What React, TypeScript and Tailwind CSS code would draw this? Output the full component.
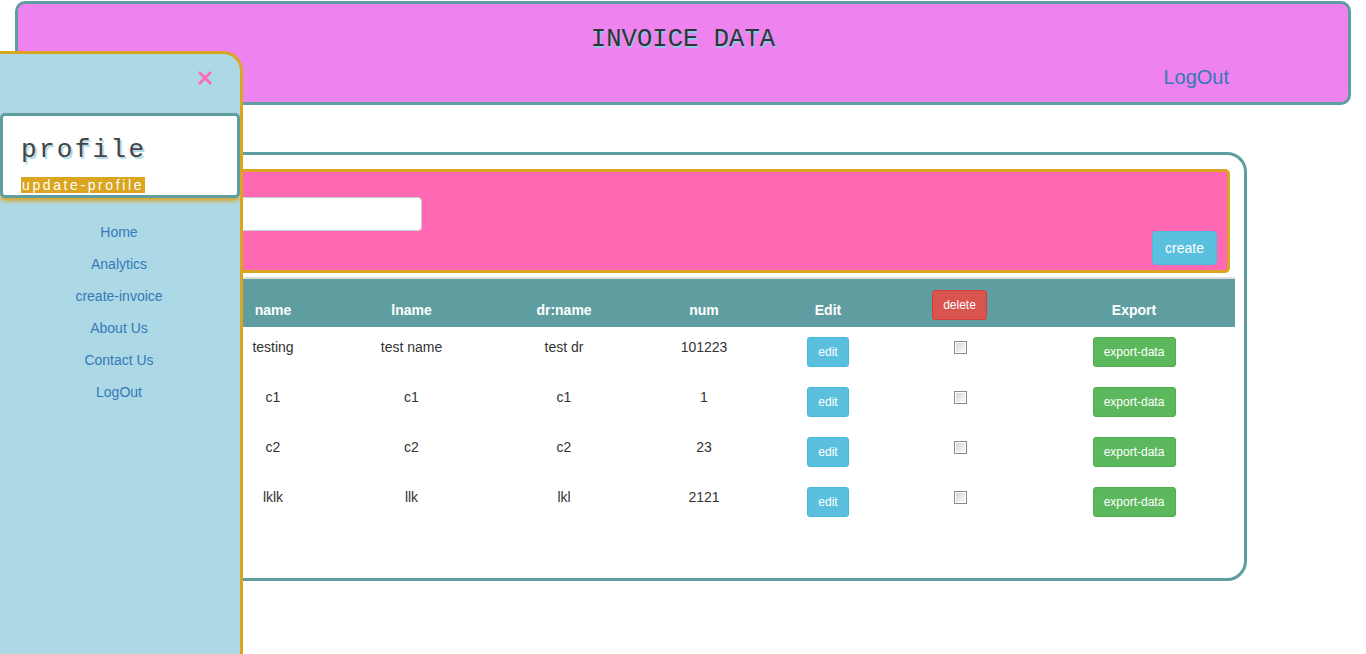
import React from 'react';

const rows = [
  { name: 'testing', lname: 'test name', dr: 'test dr', num: '101223' },
  { name: 'c1', lname: 'c1', dr: 'c1', num: '1' },
  { name: 'c2', lname: 'c2', dr: 'c2', num: '23' },
  { name: 'lklk', lname: 'llk', dr: 'lkl', num: '2121' },
];

function Checkbox() {
  return (
    <span className="mt-[4px] ml-[2px] inline-block w-[13px] h-[13px] border border-[#8a8a8a] bg-white p-[1px]">
      <span className="block w-full h-full bg-gradient-to-br from-[#d6d6d6] to-[#fbfbfb]" />
    </span>
  );
}

function Sidebar() {
  const links = ['Home', 'Analytics', 'create-invoice', 'About Us', 'Contact Us', 'LogOut'];
  return (
    <div className="fixed left-0 top-[51px] bottom-0 w-[243px] bg-[#add8e6] border-t-[3px] border-r-[3px] border-[#daa520] rounded-tr-[20px]">
      <div className="flex justify-end pr-[28px] pt-[17px] h-[59px]">
        <svg width="14" height="14" viewBox="0 0 14 14">
          <path d="M1 1 L13 13 M13 1 L1 13" stroke="#ff69b4" strokeWidth="2.6" />
        </svg>
      </div>
      <div className="h-[85px] bg-white border-[3px] border-[#5f9ea0] rounded-[5px] shadow-[0_3px_4px_#daa520] pl-[18px] pt-[19px]">
        <div className="font-['Liberation_Mono',monospace] text-[26px] leading-[30px] tracking-[2.3px] text-[#444] [text-shadow:2px_2px_1px_#add8e6]">
          profile
        </div>
        <div className="mt-[12px] leading-[16px]">
          <span className="bg-[#daa520] text-white text-[14px] tracking-[2.6px] px-[1px]">update-profile</span>
        </div>
      </div>
      <div className="mt-[18px] pr-[2px] flex flex-col items-center">
        {links.map((l) => (
          <a key={l} className="h-[32px] leading-[32px] text-[14px] text-[#337ab7]">
            {l}
          </a>
        ))}
      </div>
    </div>
  );
}

export default function App() {
  return (
    <div className="relative min-h-screen bg-white font-['Liberation_Sans',Arial,sans-serif] text-[14px] text-[#333] pt-[1px]">
      <div className="mx-[15px] h-[104px] bg-[#ee82ee] border-[3px] border-[#5f9ea0] rounded-[10px]">
        <div className="pt-[22px] text-center leading-[28px] font-['Liberation_Mono',monospace] text-[25.6px] text-[#333] [text-shadow:1px_2px_1px_#87ceeb]">
          INVOICE DATA
        </div>
        <div className="flex justify-end pr-[119px] mt-[11px]">
          <a className="text-[20px] leading-[24px] text-[#337ab7]">LogOut</a>
        </div>
      </div>

      <div className="ml-[200px] w-[1047px] mt-[47px] h-[429px] border-[3px] border-[#5f9ea0] rounded-[20px] pt-[14px]">
        <div className="ml-[7px] mr-[14px] h-[104px] bg-[#ff69b4] border-[3px] border-[#daa520] rounded-[5px] pt-[25px]">
          <input className="ml-[9px] block w-[200px] h-[34px] bg-white border border-[#ccc] rounded-[4px]" />
          <div className="flex justify-end pr-[10px]">
            <button className="h-[34px] px-[12px] bg-[#5bc0de] border border-[#46b8da] rounded-[4px] text-white text-[14px]">
              create
            </button>
          </div>
        </div>

        <table className="ml-[10px] mt-[4px] w-[1022px] table-fixed border-collapse">
          <colgroup>
            <col className="w-[120px]" />
            <col className="w-[157px]" />
            <col className="w-[148px]" />
            <col className="w-[132px]" />
            <col className="w-[116px]" />
            <col className="w-[147px]" />
            <col className="w-[202px]" />
          </colgroup>
          <thead>
            <tr className="bg-[#5f9ea0] text-white font-bold border-t-2 border-[#ddd]">
              {['name', 'lname', 'dr:name', 'num', 'Edit'].map((h) => (
                <th key={h} className="h-[49px] align-bottom pb-[7px] leading-[20px] text-center">
                  {h}
                </th>
              ))}
              <th className="h-[49px] align-bottom pb-[7px] text-center">
                <button className="h-[30px] px-[10px] bg-[#d9534f] border border-[#d43f3a] rounded-[3px] text-white text-[12px] font-normal">
                  delete
                </button>
              </th>
              <th className="h-[49px] align-bottom pb-[7px] leading-[20px] text-center">Export</th>
            </tr>
          </thead>
          <tbody>
            {rows.map((r, i) => (
              <tr key={i}>
                <td className="h-[50px] align-top pt-[10px] leading-[20px] text-center">{r.name}</td>
                <td className="h-[50px] align-top pt-[10px] leading-[20px] text-center">{r.lname}</td>
                <td className="h-[50px] align-top pt-[10px] leading-[20px] text-center">{r.dr}</td>
                <td className="h-[50px] align-top pt-[10px] leading-[20px] text-center">{r.num}</td>
                <td className="h-[50px] align-top pt-[10px] text-center">
                  <button className="h-[30px] w-[42px] bg-[#5bc0de] border border-[#46b8da] rounded-[3px] text-white text-[12px]">
                    edit
                  </button>
                </td>
                <td className="h-[50px] align-top pt-[10px] text-center leading-none">
                  <Checkbox />
                </td>
                <td className="h-[50px] align-top pt-[10px] text-center">
                  <button className="h-[30px] w-[83px] bg-[#5cb85c] border border-[#4cae4c] rounded-[3px] text-white text-[12px]">
                    export-data
                  </button>
                </td>
              </tr>
            ))}
          </tbody>
        </table>
      </div>

      <Sidebar />
    </div>
  );
}
